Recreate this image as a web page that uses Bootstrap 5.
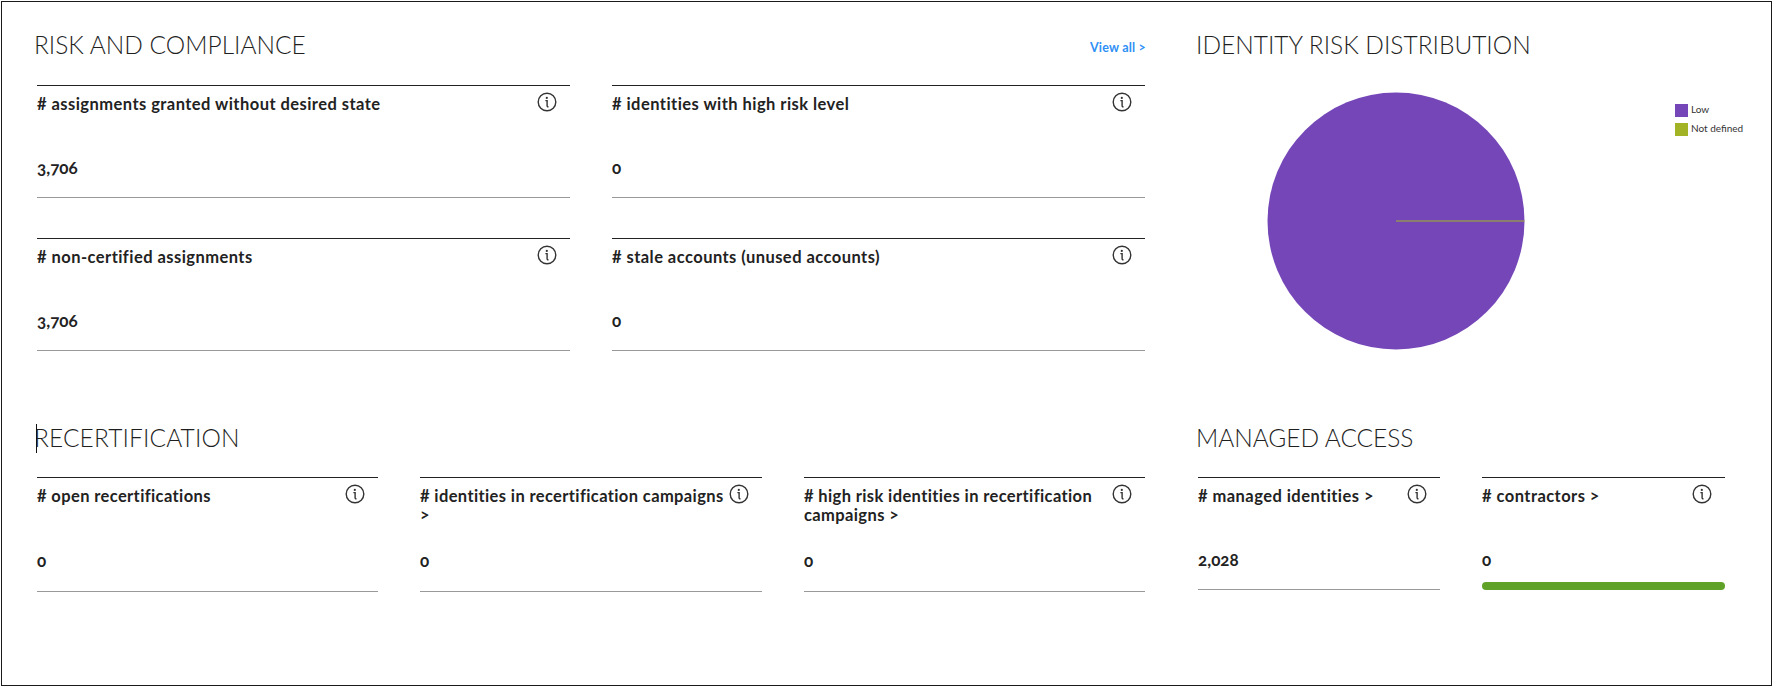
<!DOCTYPE html>
<html lang="en">
<head>
<meta charset="utf-8">
<title>Dashboard</title>
<link rel="stylesheet" href="https://cdn.jsdelivr.net/npm/bootstrap@5.3.0/dist/css/bootstrap.min.css">
<style>
html,body{height:100%;background:#fff;}
body{font-family:Lato,"Liberation Sans",sans-serif;color:#212121;overflow:hidden;}
.frame{position:relative;height:685px;width:1771px;margin:1px 0 0 1px;border:1px solid #1a1a1a;padding:0 0 0 35px;}
.band-top{height:388px;}
.band-bottom{height:296px;}
.col-main{width:1108px;flex:none;}
.col-side{width:560px;flex:none;margin-left:51px;}
.sec-head{height:83px;display:flex;align-items:flex-start;justify-content:space-between;position:relative;}
.sec-head.lower{height:87px;}
.sec-title{font-family:Lato,sans-serif;font-weight:300;font-size:24.5px;line-height:30px;margin:28px 0 0 -3px;color:#1f1f1f;white-space:nowrap;}
.lower .sec-title{margin-top:33px;letter-spacing:.12px;}
.col-side .sec-title{margin-left:0;}
.col-side .lower .sec-title{letter-spacing:-.05px;}
.view-link{font-size:12.5px;font-weight:700;color:#2e90f5;text-decoration:none;margin:37px -1px 0 0;letter-spacing:.2px;}
.two-up{display:grid;grid-template-columns:533px 533px;column-gap:42px;row-gap:40px;}
.three-up{display:grid;grid-template-columns:341px 342px 341px;column-gap:42px;}
.pair-up{display:grid;grid-template-columns:242px 243px;column-gap:42px;margin-left:2px;}
.metric{border-top:1px solid #222;border-bottom:1px solid #999;height:113px;position:relative;padding-top:9px;}
.three-up .metric{height:115px;}
.metric-label{font-size:16.5px;font-weight:700;line-height:19px;color:#222;padding-right:34px;letter-spacing:.45px;}
.three-up .metric-label{letter-spacing:.38px;}
.metric-num{position:absolute;left:0;top:73px;font-size:17px;font-weight:700;line-height:18px;color:#222;font-variant-numeric:oldstyle-nums;font-feature-settings:"onum" 1;}
.three-up .metric-num{top:74px;}
.info-mark{position:absolute;right:13px;top:5.5px;width:20px;height:20px;display:block;}
.metric.flat{border-bottom:0;}
.bar-ok{position:absolute;left:0;right:0;bottom:0;height:8px;border-radius:4px;background:#5fa227;}
.caret-line{position:absolute;left:-1px;top:34px;width:1px;height:29px;background:#111;}
.pie-zone{position:relative;height:304px;}
.pie-svg{position:absolute;left:71px;top:7px;}
.legend-list{position:absolute;left:479px;top:19px;font-size:10px;line-height:13px;color:#333;}
.legend-row{display:flex;align-items:center;gap:3px;margin-bottom:6px;}
.legend-row span:last-child{position:relative;top:-1px;}
.swatch{width:13px;height:13px;display:block;}
.sw-low{background:#7546b8;}
.sw-nd{background:#a2b426;}
</style>
</head>
<body>
<svg width="0" height="0" class="position-absolute">
  <symbol id="info" viewBox="0 0 20 20">
    <circle cx="10" cy="10" r="8.8" fill="none" stroke="#333" stroke-width="1.4"/>
    <circle cx="9.8" cy="5.9" r="1.1" fill="#333"/>
    <path d="M8.4 8.6h1.7v5.2c0 .7.4 1 1.4.9" fill="none" stroke="#333" stroke-width="1.4"/>
  </symbol>
</svg>
<div class="frame">
  <div class="d-flex band-top">
    <div class="col-main">
      <div class="sec-head"><h2 class="sec-title">RISK AND COMPLIANCE</h2><a class="view-link" href="#">View all &gt;</a></div>
      <div class="two-up">
        <div class="metric"><div class="metric-label"># assignments granted without desired state</div><svg class="info-mark"><use href="#info"/></svg><div class="metric-num">3,706</div></div>
        <div class="metric"><div class="metric-label"># identities with high risk level</div><svg class="info-mark"><use href="#info"/></svg><div class="metric-num">0</div></div>
        <div class="metric"><div class="metric-label"># non-certified assignments</div><svg class="info-mark"><use href="#info"/></svg><div class="metric-num">3,706</div></div>
        <div class="metric"><div class="metric-label"># stale accounts (unused accounts)</div><svg class="info-mark"><use href="#info"/></svg><div class="metric-num">0</div></div>
      </div>
    </div>
    <div class="col-side">
      <div class="sec-head"><h2 class="sec-title">IDENTITY RISK DISTRIBUTION</h2></div>
      <div class="pie-zone">
        <svg class="pie-svg" width="258" height="258" viewBox="0 0 258 258">
          <circle cx="129" cy="129" r="128.5" fill="#7546b8"/>
          <line x1="129" y1="129" x2="257.5" y2="129" stroke="#a2b426" stroke-width="1"/>
        </svg>
        <div class="legend-list">
          <div class="legend-row"><span class="swatch sw-low"></span><span>Low</span></div>
          <div class="legend-row"><span class="swatch sw-nd"></span><span>Not defined</span></div>
        </div>
      </div>
    </div>
  </div>
  <div class="d-flex band-bottom">
    <div class="col-main">
      <div class="sec-head lower"><span class="caret-line"></span><h2 class="sec-title">RECERTIFICATION</h2></div>
      <div class="three-up">
        <div class="metric"><div class="metric-label"># open recertifications</div><svg class="info-mark"><use href="#info"/></svg><div class="metric-num">0</div></div>
        <div class="metric"><div class="metric-label"># identities in recertification campaigns &gt;</div><svg class="info-mark"><use href="#info"/></svg><div class="metric-num">0</div></div>
        <div class="metric"><div class="metric-label"># high risk identities in recertification campaigns &gt;</div><svg class="info-mark"><use href="#info"/></svg><div class="metric-num">0</div></div>
      </div>
    </div>
    <div class="col-side">
      <div class="sec-head lower"><h2 class="sec-title">MANAGED ACCESS</h2></div>
      <div class="pair-up">
        <div class="metric"><div class="metric-label"># managed identities &gt;</div><svg class="info-mark"><use href="#info"/></svg><div class="metric-num">2,028</div></div>
        <div class="metric flat"><div class="metric-label"># contractors &gt;</div><svg class="info-mark"><use href="#info"/></svg><div class="metric-num">0</div><div class="bar-ok"></div></div>
      </div>
    </div>
  </div>
</div>
<script src="https://cdn.jsdelivr.net/npm/bootstrap@5.3.0/dist/js/bootstrap.bundle.min.js"></script>
</body>
</html>
